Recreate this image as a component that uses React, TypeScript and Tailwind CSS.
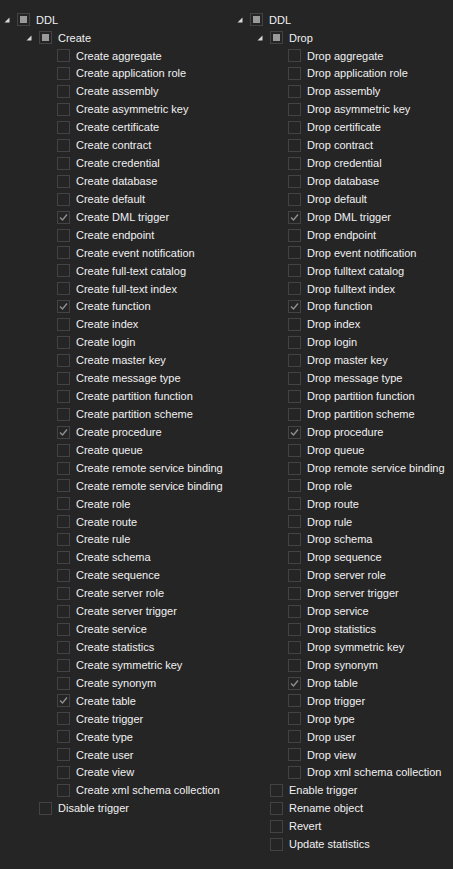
import React from 'react';

type State = 'none' | 'checked' | 'partial';

const createItems = [
  'aggregate', 'application role', 'assembly', 'asymmetric key', 'certificate', 'contract',
  'credential', 'database', 'default', 'DML trigger', 'endpoint', 'event notification',
  'full-text catalog', 'full-text index', 'function', 'index', 'login', 'master key',
  'message type', 'partition function', 'partition scheme', 'procedure', 'queue',
  'remote service binding', 'remote service binding', 'role', 'route', 'rule', 'schema',
  'sequence', 'server role', 'server trigger', 'service', 'statistics', 'symmetric key',
  'synonym', 'table', 'trigger', 'type', 'user', 'view', 'xml schema collection',
];

const dropItems = [
  'aggregate', 'application role', 'assembly', 'asymmetric key', 'certificate', 'contract',
  'credential', 'database', 'default', 'DML trigger', 'endpoint', 'event notification',
  'fulltext catalog', 'fulltext index', 'function', 'index', 'login', 'master key',
  'message type', 'partition function', 'partition scheme', 'procedure', 'queue',
  'remote service binding', 'role', 'route', 'rule', 'schema', 'sequence', 'server role',
  'server trigger', 'service', 'statistics', 'symmetric key', 'synonym', 'table', 'trigger',
  'type', 'user', 'view', 'xml schema collection',
];

const checkedSet = ['DML trigger', 'function', 'procedure', 'table'];

function Box({ state }: { state: State }) {
  return (
    <div className="w-[13px] h-[13px] shrink-0 border border-[#434346] bg-[#252526] flex items-center justify-center">
      {state === 'partial' && <div className="w-[7px] h-[7px] bg-[#9a9a9a]" />}
      {state === 'checked' && (
        <svg width="11" height="11" viewBox="0 0 11 11">
          <path d="M2 5.5 L4.5 8 L9 2.5" fill="none" stroke="#8f8f8f" strokeWidth="1.4" />
        </svg>
      )}
    </div>
  );
}

function Arrow() {
  return (
    <svg width="6" height="6" viewBox="0 0 6 6" className="shrink-0">
      <path d="M5.5 0.5 L5.5 5.5 L0.5 5.5 Z" fill="#d8d8d8" />
    </svg>
  );
}

type Level = 'top' | 'topWide' | 'group' | 'groupLeaf' | 'leaf';

function Row({ level, label, state = 'none', expander }: { level: Level; label: string; state?: State; expander?: boolean }) {
  const pad = {
    top: 'pl-[4px]',
    topWide: 'pl-[6px]',
    group: 'pl-[26px]',
    groupLeaf: 'pl-[39px]',
    leaf: 'pl-[57px]',
  }[level];
  return (
    <div className={`flex items-center h-[17.93px] ${pad}`}>
      {expander && (
        <div className="w-[13px] shrink-0 flex items-center">
          <Arrow />
        </div>
      )}
      <Box state={state} />
      <span className="ml-[6px] whitespace-nowrap">{label}</span>
    </div>
  );
}

function Column({ group, items, extra, wide }: { group: string; items: string[]; extra: string[]; wide?: boolean }) {
  return (
    <div className={wide ? 'w-[222px] shrink-0' : 'w-[231px] shrink-0'}>
      <Row level={wide ? 'topWide' : 'top'} label="DDL" state="partial" expander />
      <Row level={wide ? 'group' : 'group'} label={group} state="partial" expander />
      {items.map((it, i) => (
        <Row key={i} level="leaf" label={`${group} ${it}`} state={checkedSet.includes(it) ? 'checked' : 'none'} />
      ))}
      {extra.map((e) => (
        <Row key={e} level="groupLeaf" label={e} />
      ))}
    </div>
  );
}

export default function App() {
  return (
    <div
      className="w-[453px] h-[869px] bg-[#252526] text-[#f1f1f1] text-[11px] pt-[11px] flex overflow-hidden"
      style={{ fontFamily: '"Liberation Sans", Arial, sans-serif' }}
    >
      <Column group="Create" items={createItems} extra={['Disable trigger']} />
      <Column group="Drop" items={dropItems} extra={['Enable trigger', 'Rename object', 'Revert', 'Update statistics']} wide />
    </div>
  );
}
